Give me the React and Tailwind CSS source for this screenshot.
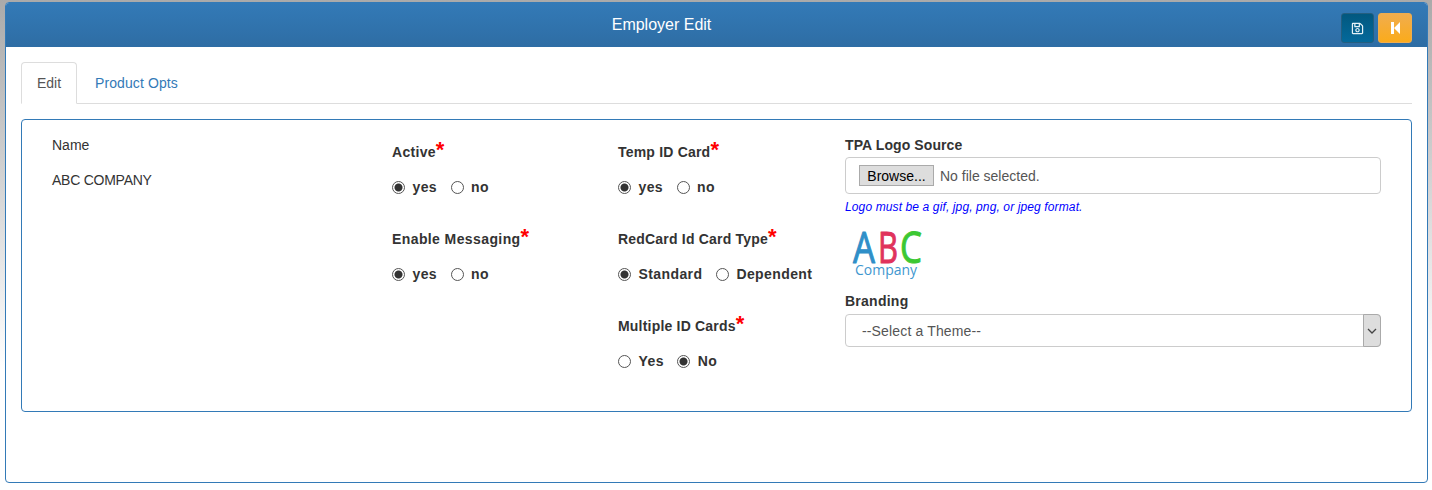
import { FaRegSave } from "react-icons/fa";

const RadioOption = ({ name, label, checked }) => (
  <label className="flex items-center">
    <input
      className="h-[13px] w-[13px] appearance-none rounded-full border border-[#555] bg-white checked:bg-[radial-gradient(circle,#333_0,#333_3.5px,#fff_4.5px)]"
      type="radio"
      name={name}
      defaultChecked={checked}
    />
    <span className="ml-[7.5px] font-bold tracking-[0.4px]">{label}</span>
  </label>
);

const RadioGroup = ({ title, name, options, value, titleClass = "tracking-[0.2px]", className = "" }) => (
  <div className={className}>
    <div className={`flex h-[20px] items-start pt-[1px] font-bold ${titleClass}`}>
      {title}
      <span className="mt-[-3px] text-[22px] leading-[22px] text-[#f00]">*</span>
    </div>
    <div className="mt-[16px] flex h-[20px] items-center gap-[13.5px]">
      {options.map((option) => (
        <RadioOption key={option} name={name} label={option} checked={option === value} />
      ))}
    </div>
  </div>
);

const Logo = () => (
  <svg className="ml-[6px] block" width="74" height="73" viewBox="0 0 74 73">
    <g fontFamily="'Open Sans', sans-serif" fontSize="43" stroke="currentColor" strokeWidth="1" strokeLinejoin="round">
      <text className="text-[#2f8fc8]" x="2" y="46" fill="#2f8fc8" textLength="22" lengthAdjust="spacingAndGlyphs">A</text>
      <text className="text-[#e0335c]" x="27" y="46" fill="#e0335c" textLength="20" lengthAdjust="spacingAndGlyphs">B</text>
      <text className="text-[#3cc832]" x="49" y="46" fill="#3cc832" textLength="22" lengthAdjust="spacingAndGlyphs">C</text>
    </g>
    <text x="4" y="58" fontFamily="'Open Sans', sans-serif" fontSize="15" fill="#3f97cf" textLength="62" lengthAdjust="spacingAndGlyphs">Company</text>
  </svg>
);

export default function App() {
  return (
    <div className="h-[490px] overflow-hidden bg-[linear-gradient(180deg,#aaa_0,#fff_370px)] px-[5px] pt-[2px] font-['Liberation_Sans',Arial,sans-serif] text-[14px] leading-[20px] text-[#333]">
      <div className="mr-[-1px] h-[481px] overflow-hidden rounded-[4px] border border-[#337ab7] bg-white">
        <div className="flex h-[44px] bg-[linear-gradient(180deg,#337ab7,#2e6da4)] pt-[10px]">
          <div className="w-[1311px] pt-[2px] text-center text-[16px] leading-[20px] text-white">Employer Edit</div>
          <div className="flex gap-[4px] pl-[24px]">
            <button className="flex h-[30px] w-[33px] items-center justify-center rounded-[3px] border border-[#245e7f] bg-[linear-gradient(180deg,#02587f,#04699b)] text-[13px] text-[#e4f1f7]" type="button">
              <FaRegSave />
            </button>
            <button className="flex h-[30px] w-[34px] items-center justify-center rounded-[3px] border border-[#f0ad4e] bg-[linear-gradient(180deg,#f0ad4e,#fbab1b)]" type="button">
              <svg width="9" height="12" viewBox="0 0 9 12" fill="#fff">
                <path d="M0 0h3v12H0zM9 0v12L3 6z" />
              </svg>
            </button>
          </div>
        </div>

        <div className="px-[15px] pt-[15px]">
          <div className="flex h-[42px] border-b border-[#ddd]">
            <div className="h-[42px] w-[56px] rounded-t-[4px] border border-b-white border-[#ddd] bg-white pt-[10px] text-center text-[#555]">Edit</div>
            <div className="ml-[2px] px-[16px] pt-[11px] tracking-[0.1px] text-[#337ab7]">Product Opts</div>
          </div>

          <div className="mt-[15px] grid h-[293px] grid-cols-[370px_226px_227px_536px] rounded-[4px] border border-[#337ab7] pt-[15px]">
            <div className="pl-[30px]">
              <div>Name</div>
              <div className="mt-[15px] tracking-[-0.25px]">ABC COMPANY</div>
            </div>

            <div className="pt-[6px]">
              <RadioGroup titleClass="tracking-[0.3px]" title="Active" name="active" options={["yes", "no"]} value="yes" />
              <RadioGroup titleClass="tracking-[0.4px]" className="mt-[31px]" title="Enable Messaging" name="messaging" options={["yes", "no"]} value="yes" />
            </div>

            <div className="pt-[6px]">
              <RadioGroup title="Temp ID Card" name="tempCard" options={["yes", "no"]} value="yes" />
              <RadioGroup className="mt-[31px]" title="RedCard Id Card Type" name="cardType" options={["Standard", "Dependent"]} value="Standard" />
              <RadioGroup className="mt-[31px]" title="Multiple ID Cards" name="multiple" options={["Yes", "No"]} value="No" />
            </div>

            <div>
              <div className="font-bold tracking-[0.1px]">TPA Logo Source</div>
              <div className="mt-[2px] flex h-[37px] items-center rounded-[4px] border border-[#ccc] pl-[13px] text-[#555]">
                <button className="h-[21px] w-[75px] border border-[#aaa] bg-[#ddd] text-[14px] leading-[18px] text-black" type="button">Browse...</button>
                <span className="ml-[6px]">No file selected.</span>
              </div>
              <div className="mt-[3px] text-[12px] leading-[20px] tracking-[0.12px] text-[#00f] italic">Logo must be a gif, jpg, png, or jpeg format.</div>
              <Logo />
              <div className="mt-[1px] font-bold tracking-[0.25px]">Branding</div>
              <div className="relative mt-[3px] h-[33px]">
                <select className="h-full w-full appearance-none rounded-[4px] border border-[#ccc] bg-white pl-[16px] tracking-[0.15px] text-[#555]">
                  <option>--Select a Theme--</option>
                </select>
                <div className="absolute top-0 right-0 flex h-[33px] w-[18px] items-center justify-center rounded-r-[4px] border border-[#aaa] bg-[#ddd]">
                  <svg width="10" height="6" viewBox="0 0 10 6" fill="none" stroke="#444" strokeWidth="1.3">
                    <path d="M1 1l4 4 4-4" />
                  </svg>
                </div>
              </div>
            </div>
          </div>
        </div>
      </div>
    </div>
  );
}
